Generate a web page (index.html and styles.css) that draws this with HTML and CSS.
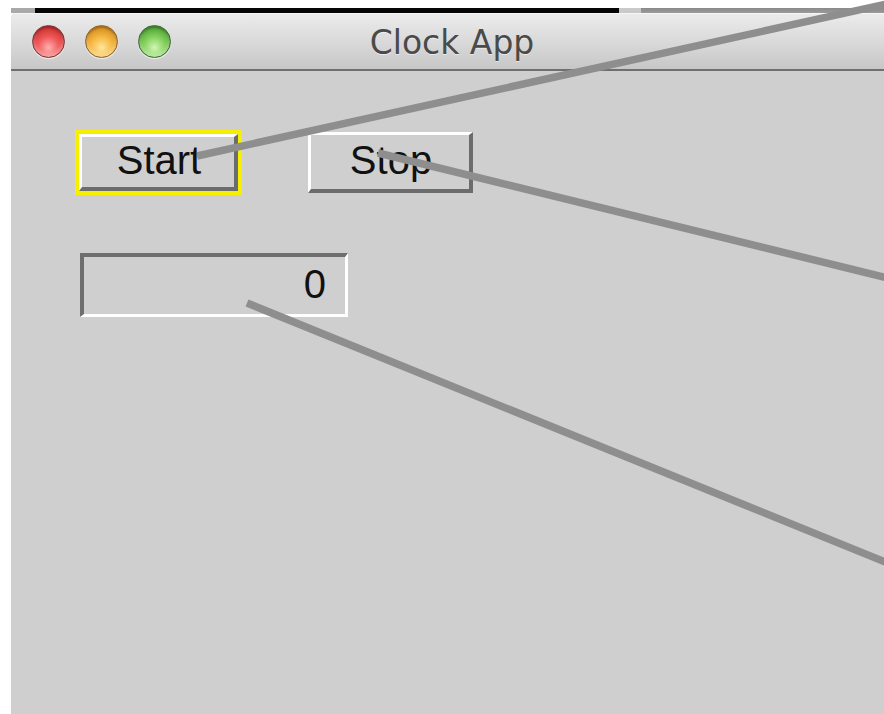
FILE: index.html
```html
<!DOCTYPE html>
<html lang="en">
<head>
<meta charset="utf-8">
<title>Clock App</title>
<link rel="stylesheet" href="styles.css">
</head>
<body>
<div class="desk">
  <div class="behind">
    <span class="behind-a"></span>
    <span class="behind-b"></span>
    <span class="behind-c"></span>
    <span class="behind-d"></span>
  </div>
  <div class="window">
    <header class="titlebar">
      <div class="lights">
        <span class="light light-close"></span>
        <span class="light light-min"></span>
        <span class="light light-zoom"></span>
      </div>
      <div class="title">Clock App</div>
      <div></div>
    </header>
    <main class="content">
      <div class="row">
        <div class="focus-ring">
          <button class="tk-button" type="button">Start</button>
        </div>
        <button class="tk-button stop" type="button">Stop</button>
      </div>
      <div class="field">0</div>
    </main>
  </div>
</div>
<svg class="callouts" width="884" height="714" viewBox="0 0 884 714" aria-hidden="true">
  <line x1="197" y1="156" x2="900" y2="1" />
  <line x1="378" y1="153" x2="900" y2="281" />
  <line x1="247" y1="303" x2="900" y2="568" />
</svg>
</body>
</html>
```
FILE: styles.css
```css
html, body {
  margin: 0;
  padding: 0;
  width: 884px;
  height: 714px;
  overflow: hidden;
  background: #ffffff;
}

.desk {
  padding: 8px 0 0 11px;
  height: 706px;
  box-sizing: border-box;
}

/* strip of the windows stacked behind */
.behind {
  display: flex;
  height: 5px;
  width: 900px;
}
.behind-a { width: 24px; background: #a9a9a9; }
.behind-b { width: 584px; background: #050505; }
.behind-c { width: 22px; background: #c9c9c9; }
.behind-d { flex: 1; background: linear-gradient(#8a8a8a, #9a9a9a); }

.window {
  width: 882px;
  height: 701px;
  display: flex;
  flex-direction: column;
  background: #cfcfcf;
  border-radius: 5px 5px 0 0;
  overflow: hidden;
}

.titlebar {
  height: 56px;
  display: grid;
  grid-template-columns: 1fr auto 1fr;
  align-items: center;
  background: linear-gradient(#ececec, #dadada 50%, #c7c7c7);
  border-bottom: 2px solid #6f6f6f;
  box-shadow: inset 0 1px 0 #f6f6f6;
}

.lights {
  display: flex;
  gap: 20px;
  padding-left: 21px;
  padding-top: 1px;
}

.light {
  width: 31px;
  height: 31px;
  border-radius: 50%;
  border: 1px solid rgba(60, 30, 30, 0.55);
  box-shadow: 0 1px 1px rgba(255, 255, 255, 0.7), inset 0 2px 2px rgba(0, 0, 0, 0.25), inset 0 -3px 4px rgba(255, 255, 255, 0.4);
}
.light-close {
  background: radial-gradient(circle at 50% 70%, #ffb0b0 0%, #f05a5a 40%, #c92e2e 80%, #a82424 100%);
  border-color: #7e3434;
}
.light-min {
  background: radial-gradient(circle at 50% 70%, #ffe79c 0%, #f6b943 40%, #d38a1c 80%, #b97418 100%);
  border-color: #8e6426;
}
.light-zoom {
  background: radial-gradient(circle at 50% 70%, #d2f7b4 0%, #85d25e 40%, #4b9f32 80%, #3a8526 100%);
  border-color: #3b6a31;
}

.title {
  font-family: "DejaVu Sans", "Liberation Sans", sans-serif;
  font-size: 33px;
  color: #4a4a4a;
  text-shadow: 0 1px 0 rgba(255, 255, 255, 0.55);
  padding-top: 3px;
}

.content {
  flex: 1;
  padding: 59px 0 0 64px;
  display: flex;
  flex-direction: column;
  align-items: flex-start;
}

.row {
  display: flex;
  align-items: center;
  gap: 66px;
}

.focus-ring {
  border: 4px solid #f6f000;
  display: flex;
}

.tk-button {
  margin: 0;
  width: 159px;
  height: 57px;
  padding: 0 0 4px 2px;
  box-sizing: border-box;
  background: #cfcfcf;
  border-style: solid;
  border-width: 3px 4px 4px 3px;
  border-color: #ffffff #6c6c6c #6c6c6c #ffffff;
  font-family: "Liberation Sans", Arial, sans-serif;
  font-size: 40px;
  line-height: 1;
  color: #111111;
}

.stop {
  width: 165px;
  height: 61px;
}

.field {
  margin: 58px 0 0 5px;
  width: 268px;
  height: 64px;
  box-sizing: border-box;
  border-style: solid;
  border-width: 4px 3px 3px 4px;
  border-color: #6e6e6e #ffffff #ffffff #6e6e6e;
  background: #cfcfcf;
  display: flex;
  align-items: center;
  justify-content: flex-end;
  padding: 0 19px 2px 0;
  font-family: "Liberation Sans", Arial, sans-serif;
  font-size: 40px;
  color: #111111;
}

/* annotation leaders drawn across the window */
.callouts {
  position: absolute;
  left: 0;
  top: 0;
  pointer-events: none;
}
.callouts line {
  stroke: #8e8e8e;
  stroke-width: 7.5;
}
```
